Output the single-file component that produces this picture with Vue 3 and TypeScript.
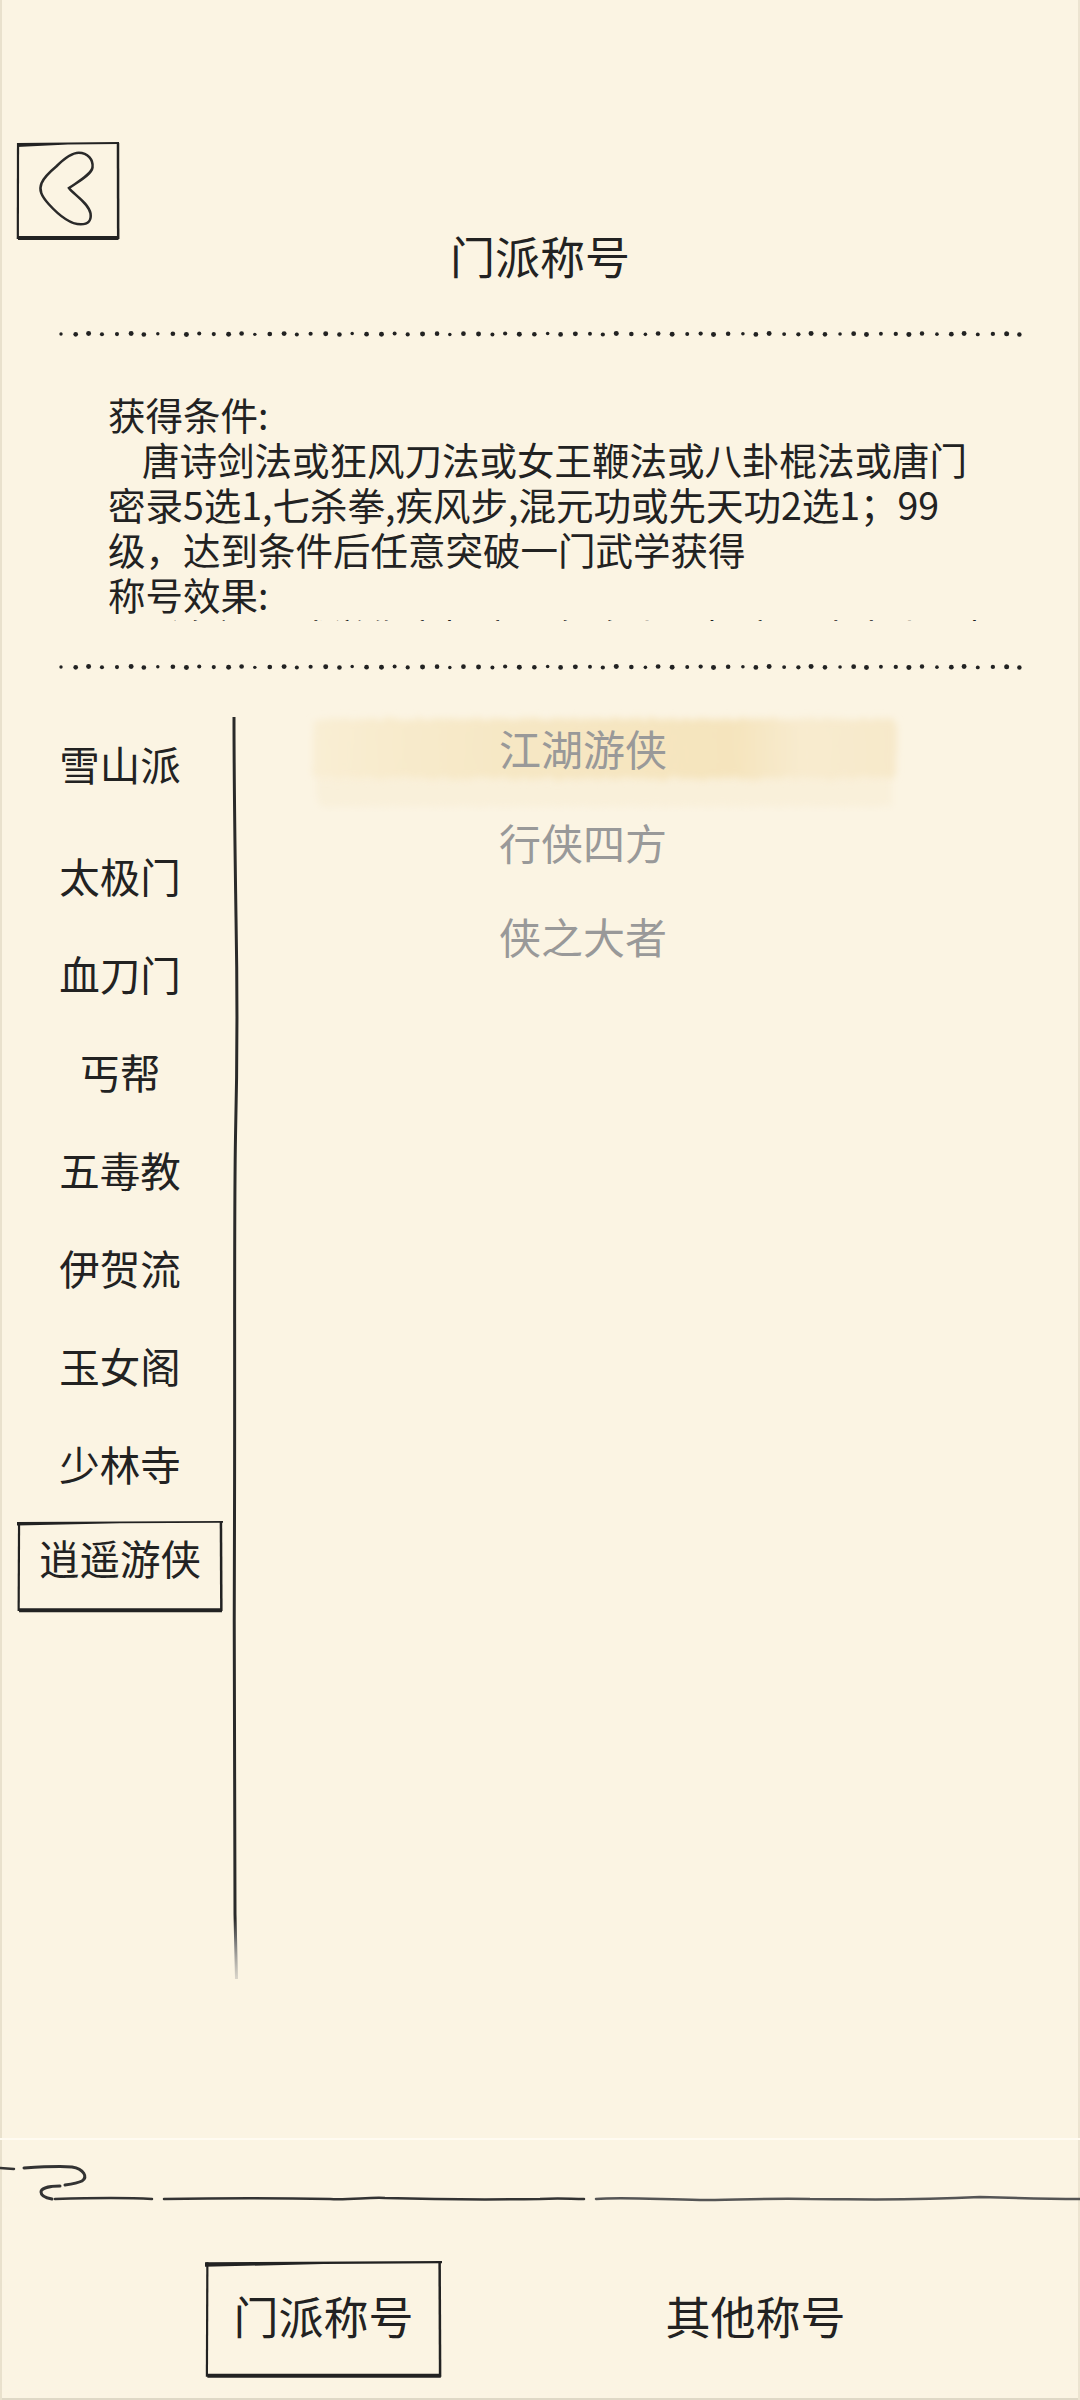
<template>
  <div class="page">
    <header class="header">
      <button class="back">
        <svg class="frame" viewBox="0 0 100 100" preserveAspectRatio="none">
          <path class="taper" :d="frameTop" />
          <path v-for="line in frameLines" :key="line.d" :d="line.d" :stroke-width="line.w" vector-effect="non-scaling-stroke" />
        </svg>
        <svg class="chevron" viewBox="0 0 102 100">
          <path d="M39 25C48 16 55 11 62 11C71 11 77 18 76 26C75 33 62 40 52 47C56 53 72 62 74 73C75 80 72 84 64 84C53 84 40 73 31 63C24 55 21 49 24 42C27 35 33 30 39 25Z" />
        </svg>
      </button>
      <h1 class="title">门派称号</h1>
    </header>

    <svg class="dots" viewBox="0 0 1080 6">
      <circle v-for="d in dots" :key="d.x" :cx="d.x" :cy="d.y" :r="d.r" />
    </svg>

    <section class="desc">
      <div>获得条件:</div>
      <p>唐诗剑法或狂风刀法或女王鞭法或八卦棍法或唐门<br />密录5选1,七杀拳,疾风步,混元功或先天功2选1；99<br />级，达到条件后任意突破一门武学获得</p>
      <div>称号效果:</div>
      <p class="cut">所有门派武学伤害提高，气血上限提高，内力上限提高</p>
    </section>

    <svg class="dots dots-second" viewBox="0 0 1080 6">
      <circle v-for="d in dots" :key="d.x" :cx="d.x" :cy="d.y" :r="d.r" />
    </svg>

    <main class="body">
      <nav class="sects">
        <div v-for="s in sects" :key="s" class="sect" :class="{ active: s === current }">
          <svg v-if="s === current" class="frame" viewBox="0 0 100 100" preserveAspectRatio="none">
            <path class="taper" :d="frameTop" />
            <path v-for="line in frameLines" :key="line.d" :d="line.d" :stroke-width="line.w" vector-effect="non-scaling-stroke" />
          </svg>
          <span>{{ s }}</span>
        </div>
      </nav>

      <svg class="divider" viewBox="0 0 20 1264">
        <defs>
          <linearGradient id="tail" gradientUnits="userSpaceOnUse" x1="0" y1="1160" x2="0" y2="1264">
            <stop offset="0" stop-color="#2a2a2a" />
            <stop offset="0.4" stop-color="#2a2a2a" />
            <stop offset="0.62" stop-color="#777" />
            <stop offset="1" stop-color="#999" stop-opacity="0.3" />
          </linearGradient>
        </defs>
        <path d="M8 0C8 70 9 130 10 200C11.500 280 11 360 9.500 420C8 500 9 640 8.500 800C8 940 8 1100 9 1197C9.500 1220 10 1240 10.500 1262" fill="none" stroke="url(#tail)" stroke-width="3" />
      </svg>

      <ul class="titles">
        <li v-for="(t, i) in titles" :key="t" class="row">
          <svg v-if="i === 0" class="brush" viewBox="0 0 600 105">
            <defs>
              <linearGradient id="band" x1="0" y1="0" x2="1" y2="0">
                <stop offset="0" stop-color="#f9eed4" />
                <stop offset="0.12" stop-color="#f8ebcd" />
                <stop offset="0.35" stop-color="#f6e7c4" />
                <stop offset="0.72" stop-color="#f5e4bd" />
                <stop offset="0.84" stop-color="#f8ebcf" />
                <stop offset="1" stop-color="#f7e9ca" />
              </linearGradient>
              <filter id="soft" x="-5%" y="-30%" width="110%" height="160%">
                <feTurbulence type="fractalNoise" baseFrequency="0.18 0.02" numOctaves="2" seed="4" result="grain" />
                <feDisplacementMap in="SourceGraphic" in2="grain" scale="8" xChannelSelector="R" yChannelSelector="G" />
                <feGaussianBlur stdDeviation="3.500" />
              </filter>
            </defs>
            <rect x="12" y="70" width="575" height="30" fill="#f9f0da" filter="url(#soft)" />
            <rect x="8" y="12" width="584" height="60" rx="8" fill="url(#band)" filter="url(#soft)" />
          </svg>
          <span class="row-text">{{ t }}</span>
        </li>
      </ul>
    </main>

    <footer class="footer">
      <div class="paper-edge"></div>
      <svg class="stroke" viewBox="0 2160 1080 50">
        <path d="M0 2168L14 2169" stroke-width="2.500" />
        <path d="M24 2168C40 2167 60 2166 72 2167C84 2169 88 2177 82 2181C78 2183 72 2184 65 2185" stroke-width="3" />
        <path d="M60 2186C50 2186 41 2188 41 2192C41 2196 46 2198 52 2199" stroke-width="3" />
        <path d="M55 2199C85 2198 120 2197 152 2199" stroke-width="2.500" />
        <path d="M164 2199C220 2198 280 2198 330 2199C350 2200 370 2197 385 2198C420 2199 470 2200 540 2199C560 2198 570 2199 584 2199" stroke-width="2.500" />
        <path d="M596 2199C620 2197 650 2199 700 2200C730 2200 770 2198 810 2199C860 2199 900 2201 980 2197C1010 2198 1050 2199 1080 2199" stroke="#555" stroke-width="2.500" />
      </svg>
      <div class="tabs">
        <div v-for="t in tabs" :key="t" class="tab">
          <svg v-if="t === activeTab" class="frame" viewBox="0 0 100 100" preserveAspectRatio="none">
            <path class="taper" :d="frameTop" />
            <path v-for="line in frameLines" :key="line.d" :d="line.d" :stroke-width="line.w" vector-effect="non-scaling-stroke" />
          </svg>
          <span>{{ t }}</span>
        </div>
      </div>
    </footer>
  </div>
</template>

<script setup lang="ts">
const sects = ['雪山派', '太极门', '血刀门', '丐帮', '五毒教', '伊贺流', '玉女阁', '少林寺', '逍遥游侠']
const current = '逍遥游侠'
const titles = ['江湖游侠', '行侠四方', '侠之大者']
const tabs = ['门派称号', '其他称号']
const activeTab = '门派称号'

// hand drawn box, shared by back button, selected sect and selected tab
const frameTop = 'M0 1L100 0L100 2L50 2.500L0 5Z'
const frameLines = [
  { d: 'M99 1L99.200 99', w: 2.5 },
  { d: 'M99.500 98L1 98', w: 4 },
  { d: 'M1 1L0.800 99', w: 2.2 }
]

// slightly uneven row of ink dots
const dots = Array.from({ length: 70 }, (_, i) => ({
  x: 61 + i * 13.9 + Math.sin(i * 1.7) * 0.8,
  y: 3 + Math.sin(i * 2.3) * 0.5,
  r: 1.7 + Math.abs(Math.sin(i * 0.9)) * 0.8
}))
</script>

<style>
html,
body {
  margin: 0;
  background: #fbf4e3;
}
</style>

<style scoped>
.page {
  position: relative;
  width: 1080px;
  height: 2400px;
  display: flex;
  flex-direction: column;
  overflow: hidden;
  background: #fbf4e3;
  box-shadow: inset 2px 0 0 #e9e1cd, inset -2px 0 0 #ece4d1, inset 0 -2px 0 #dfd8c6;
  color: #222;
  font-family: "Noto Sans CJK SC", "Noto Sans", sans-serif;
}

.header {
  display: grid;
  padding: 142px 0 0 17px;
  height: 147px;
}

.back {
  grid-area: 1 / 1;
  justify-self: start;
  align-self: start;
  position: relative;
  width: 102px;
  height: 98px;
  padding: 0;
  border: none;
  background: none;
}

.chevron {
  position: absolute;
  inset: 0;
  width: 100%;
  height: 100%;
  fill: none;
  stroke: #2a2a2a;
  stroke-width: 2.6;
}

.frame {
  position: absolute;
  inset: 0;
  width: 100%;
  height: 100%;
  fill: none;
  stroke: #222;
  overflow: visible;
}

.taper {
  fill: #222;
  stroke: none;
}

.title {
  grid-area: 1 / 1;
  justify-self: center;
  align-self: end;
  margin: 0 17px 3px 0;
  font-size: 45px;
  font-weight: 400;
  line-height: 60px;
}

.dots {
  display: block;
  width: 1080px;
  height: 6px;
  margin-top: 42px;
  flex: none;
  fill: #222;
}

.dots-second {
  margin-top: 43px;
}

.desc {
  width: 880px;
  height: 230px;
  margin: 54px 0 0 108px;
  overflow: hidden;
  font-size: 37.500px;
  line-height: 45px;
  flex: none;
}

.desc p {
  margin: 0;
  text-indent: 34px;
}

.desc p.cut {
  margin-top: -3px;
  white-space: nowrap;
}

.body {
  display: flex;
  margin-top: 47px;
  height: 1264px;
  flex: none;
}

.sects {
  width: 226px;
  flex: none;
}

.sect {
  position: relative;
  height: 98px;
  display: flex;
  align-items: center;
  justify-content: center;
  box-sizing: border-box;
  padding: 0 0 6px 14px;
  font-size: 40.500px;
}

.sect:first-child {
  margin-bottom: 14px;
}

.sect.active .frame {
  left: 17px;
  top: 6px;
  width: 206px;
  height: 91px;
}

.sect.active span {
  position: relative;
  margin-bottom: 7px;
}

.divider {
  width: 20px;
  height: 1264px;
  flex: none;
}

.titles {
  list-style: none;
  margin: 0;
  padding: 0 0 0 65px;
  display: flex;
  flex-direction: column;
  gap: 32px;
}

.row {
  position: relative;
  width: 592px;
  height: 62px;
  line-height: 62px;
  padding-left: 188px;
  box-sizing: border-box;
  font-size: 42px;
  color: #999999;
}

.row-text {
  position: relative;
}

.brush {
  position: absolute;
  left: -6px;
  top: -10px;
  width: 600px;
  height: 105px;
}

.footer {
  margin-top: auto;
  padding-bottom: 22px;
}

.paper-edge {
  height: 2px;
  margin-bottom: 20px;
  background: #fffbf1;
}

.stroke {
  display: block;
  width: 1080px;
  height: 50px;
  margin-bottom: 51px;
  fill: none;
  stroke: #333;
  stroke-linecap: round;
}

.tabs {
  display: flex;
  gap: 195px;
  padding-left: 205px;
}

.tab {
  position: relative;
  width: 237px;
  height: 117px;
  display: flex;
  align-items: center;
  justify-content: center;
  box-sizing: border-box;
  padding-bottom: 8px;
  font-size: 45px;
}
</style>
